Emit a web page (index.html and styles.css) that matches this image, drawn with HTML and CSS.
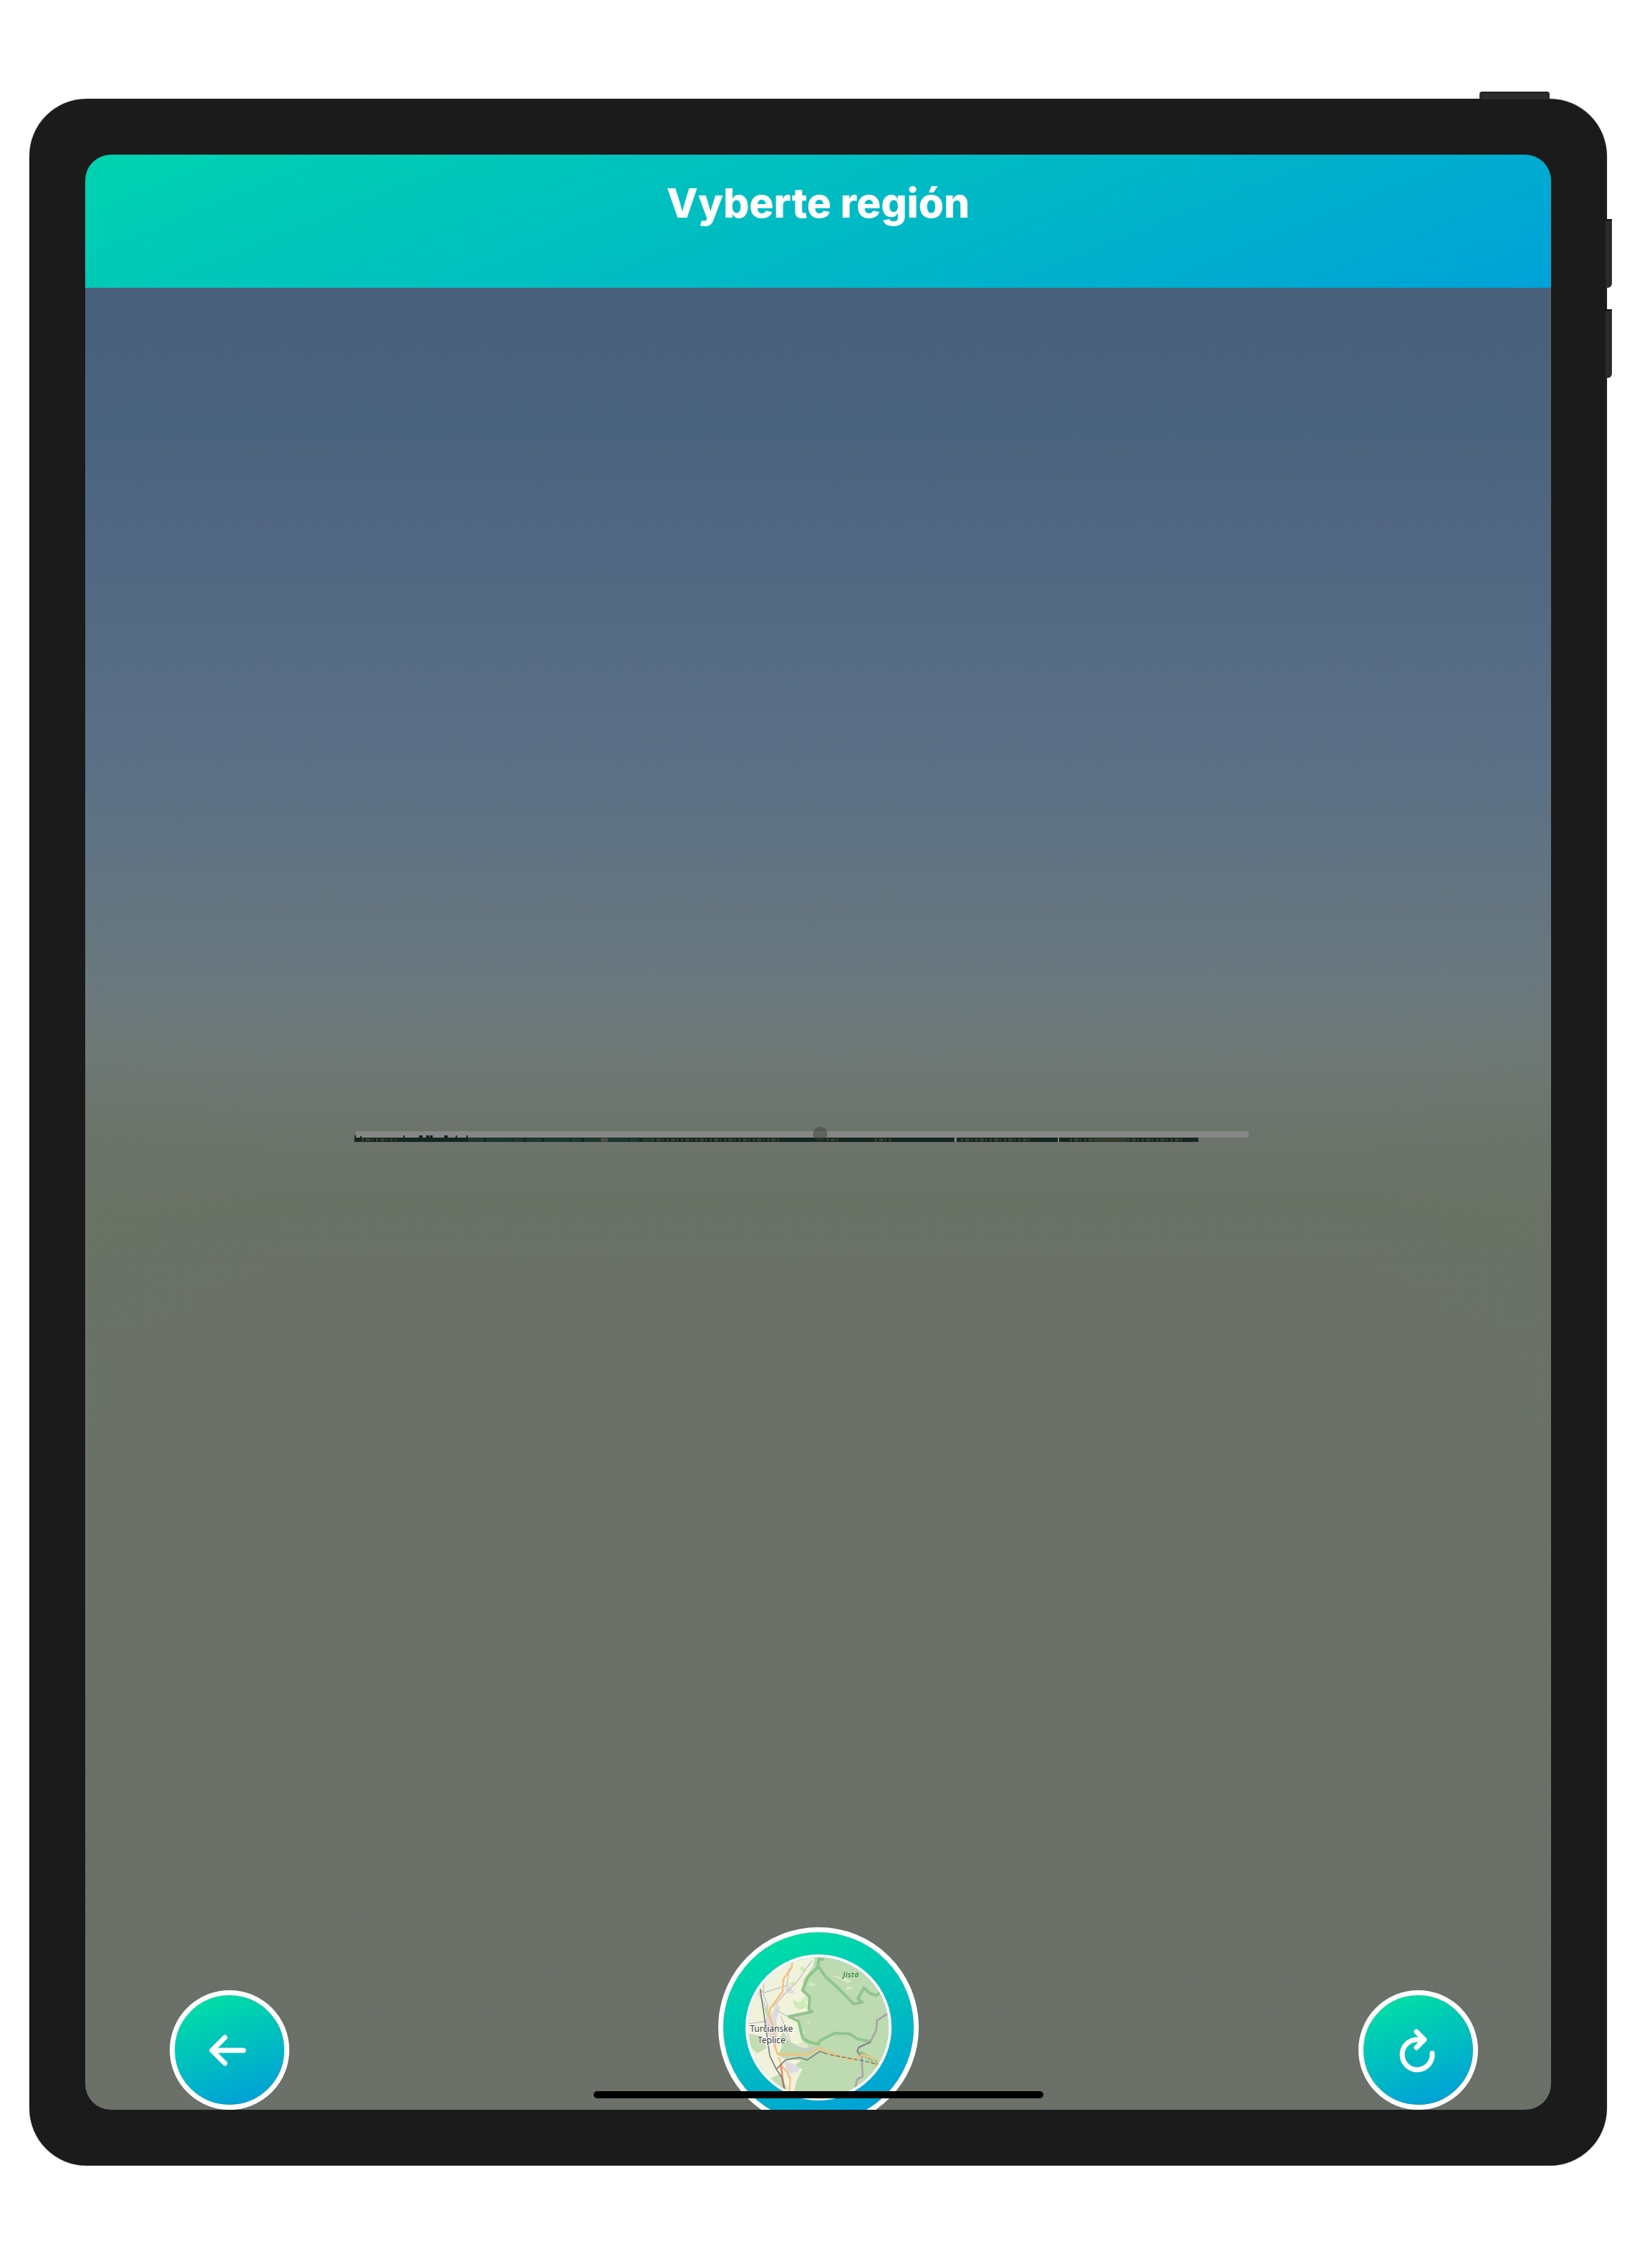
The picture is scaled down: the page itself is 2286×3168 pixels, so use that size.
FILE: index.html
```
<!DOCTYPE html>
<html lang="sk">
<head>
<meta charset="utf-8">
<meta name="viewport" content="width=device-width, initial-scale=1">
<title>Vyberte región</title>
<link rel="stylesheet" href="styles.css">
</head>
<body>
<div class="device">
  <span class="key key-power"></span>
  <span class="key key-up"></span>
  <span class="key key-down"></span>
  <div class="screen">
    <header class="header"><h1 class="title">Vyberte región</h1></header>
    <main class="scene">
      <svg class="model" viewBox="495 1574 1246 22" aria-hidden="true">
        <rect x="497" y="1580" width="1244" height="9" fill="#878787"/>
        <rect x="495" y="1589" width="1176" height="6" fill="#14261f"/>
        <path d="M495 1586h2v4h-2zM503 1587h2v3h-2zM563 1586h2v4h-2zM585 1586h5v4h-5zM595 1586h4v4h-4zM600 1586h4v4h-4zM620 1586h5v4h-5zM636 1586h2v4h-2zM651 1586h2v4h-2z" fill="#10231c"/>
        <path d="M653 1592H910" stroke="#1d3a30" stroke-width="5" stroke-dasharray="22 3 36 2 14 4"/>
        <path d="M505 1592h48M910 1592h178M1153 1592h16M1220 1592h24M1340 1592h100M1492 1592h160" stroke="#3a4033" stroke-width="4" stroke-dasharray="3 3 6 2 2 4"/>
        <path d="M838 1592h10" stroke="#4d4f48" stroke-width="5"/>
        <path d="M1331 1589h3v6h-3zM1475 1589h2v6h-2z" fill="#858782"/>
        <path d="M1525 1592h46" stroke="#353d2e" stroke-width="5"/>
        <circle cx="1144" cy="1584" r="10" fill="#3c3f3c" fill-opacity=".5"/>
      </svg>
      <nav class="controls">
        <button class="round back" type="button" aria-label="Späť">
          <svg class="icon" viewBox="0 0 153 153" aria-hidden="true"><path d="M96 77H52M70 59L52 77l18 18"/></svg>
        </button>
        <button class="round map" type="button" aria-label="Mapa">
          <svg class="map-art" viewBox="198 192 588 588" aria-hidden="true">
            <rect x="186" y="180" width="612" height="612" fill="#f1f2dc"/>
            <path d="M478 180L470 230 430 285 424 330 455 355 460 415 395 437 415 470 410 500 425 545 400 560 365 540 345 505 330 530 340 570 320 600 345 615 420 625 385 650 425 660 400 710 380 800H800V180z" fill="#bddab1"/>
            <path d="M186 510l60 10 30 50-40 25-50-50zM290 700l40-20 30 60-20 40zM262 405l16-8 10 35-12 8z" fill="#c3dcb4"/>
            <path d="M412 240l15-12 12 18-10 10zM385 370l30 12 15-22 16 40-30 12-25-12zM370 300l18-8 8 12-20 8zM440 308l20-12 22 8-10 10zM365 650l18-14 12 30z" fill="#cdebb8"/>
            <path d="M440 345l12 20-10 15-12-18zM444 458l12 4-5 12zM425 510l8-12 4 18zM398 555l30-10 25 18-10 12-35-5zM545 268l60 12 28 14-22 4zM603 320l24-6 8 8-20 6z" fill="#e0e8ca"/>
            <path d="M270 440l28-10 20-45 12 15-15 60 8 90-20 15-30-70zM350 325l16-20 14 20 12 15-22 5zM350 625l35 15 25 10-2 22-40 5 15 25-25-20z" fill="#dfdadd"/>
            <path d="M465 205l-35 50-30 42-30 28-70 75M370 235l-10 75-95 30-20-10M262 300v50l20 50M200 470l75-10M315 415l45 22 70 8M270 400l-35-70M335 440l45 125 50 8 60 10M415 570l15 12 70-6" fill="none" stroke="#ccc9cd" stroke-width="5"/>
            <g fill="none" stroke="#8fc58c" stroke-linejoin="round">
              <path d="M497 180L488 235 447 275 425 330 455 358 452 410 465 420 368 440 408 460 426 530 450 546 490 556 500 540 560 510 620 512 655 534 712 545" stroke-width="12"/>
              <path d="M488 200l26 0M492 230l28 42 55 50 65 66 35-8-18-15 25-45 25 22 28 10 24-22" stroke-width="12"/>
              <path d="M665 590l65 40 10 30" stroke-width="16"/>
            </g>
            <path d="M782 427l-45 30-3 40-25 50-48 22-6 18 18 20 4 85-22 10-12 50" fill="none" stroke="#aaa1aa" stroke-width="8"/>
            <path d="M712 547l-52 23-6 15 14 20" fill="none" stroke="#81917f" stroke-width="6"/>
            <path d="M382 215l-3 22-33 45-5 55-52 70-5 30 22 55 4 75 12 32 123 0 54-28 46 24 90 28 40-22 44 14 16 40" fill="none" stroke="#f6c07d" stroke-width="8" stroke-linejoin="round"/>
            <path d="M325 610l15 40 22 25 12 30-5 50" fill="none" stroke="#f6c07d" stroke-width="7"/>
            <path d="M334 640l6 50 10 70" fill="none" stroke="#f58e72" stroke-width="9"/>
            <path d="M248 325l22 150 18 130 26 54 24 36 14 60M316 660l38-38 60-10 30 10 54-36 32 12" fill="none" stroke="#7d7d7a" stroke-width="5"/>
            <path d="M540 600l150 28 45 12" fill="none" stroke="#6d776b" stroke-width="4" stroke-dasharray="18 7"/>
            <g class="map-town" text-anchor="middle"><text x="295" y="505">Turčianske</text><text x="295" y="552">Teplice</text></g>
            <text class="map-hill" x="627" y="277" text-anchor="middle">Jistá</text>
          </svg>
        </button>
        <button class="round reload" type="button" aria-label="Obnoviť">
          <svg class="icon" viewBox="0 0 153 153" aria-hidden="true"><path d="M96 81A21 21 0 1 1 75 62H85M74 51L85 62 74 73"/></svg>
        </button>
      </nav>
    </main>
    <span class="home"></span>
  </div>
</div>
</body>
</html>
```
FILE: styles.css
```
* { box-sizing: border-box; }
body {
  margin: 0;
  padding: 138px 42px 138px 41px;
  background: #fff;
  font-family: Inter, "Liberation Sans", sans-serif;
}
.device {
  position: relative;
  padding: 78px;
  border-radius: 80px;
  background: #1b1b1b;
  box-shadow: 0 0 1px 1px #8884;
}
.key { position: absolute; background: #2b2b2b; }
.key-power { top: -10px; right: 80px; width: 98px; height: 11px; border-radius: 4px 4px 0 0; border-top: 1px solid #111; }
.key-up, .key-down { right: -7px; width: 9px; height: 96px; border-radius: 0 0 6px 0; border-top: 2px solid #111; }
.key-up { top: 168px; }
.key-down { top: 294px; }
.screen {
  position: relative;
  display: flex;
  flex-direction: column;
  aspect-ratio: 2048 / 2732;
  border-radius: 36px;
  overflow: hidden;
}
.header {
  padding: 33px 0 83px;
  text-align: center;
  background: linear-gradient(158deg, #00d3b0, #00a2d7);
}
.title { margin: 0; font-size: 57px; line-height: 70px; font-weight: 800; color: #fff; }
.scene {
  flex: 1;
  display: flex;
  flex-direction: column;
  justify-content: space-between;
  padding-top: 1172px;
  background:
    radial-gradient(ellipse 16% 26% at 0 60%, #68756440, #68756400),
    radial-gradient(ellipse 16% 26% at 100% 60%, #68756440, #68756400),
    linear-gradient(#48607a 0, #4b647e 8%, #506681 13%, #566c84 20%, #5c7186 27%, #627482 32%, #69787f 38%, #6e7876 42%, #6c746c 46%, #6a7266 50%, #6b7067 58%, #6b7068 100%);
}
.model { display: block; width: 61%; margin-left: 376px; }
.controls {
  display: grid;
  grid-template-columns: 1fr auto 1fr;
  align-items: end;
  padding: 0 102px;
}
.round {
  display: flex;
  align-items: center;
  justify-content: center;
  width: 167px;
  height: 167px;
  padding: 0;
  border: 7px solid #fff;
  border-radius: 50%;
  background: linear-gradient(160deg, #00dfa5 8%, #009fd9 92%) padding-box;
}
.back { margin-left: 16px; }
.reload { justify-self: end; }
.map { width: 280px; height: 280px; margin-bottom: -25px; }
.icon { width: 153px; height: 153px; fill: none; stroke: #fff; stroke-width: 7; stroke-linecap: round; stroke-linejoin: round; }
.map-art { width: 204px; height: 204px; border: 4px solid #fff; border-radius: 50%; }
.map-town { font: 36px "Noto Sans", sans-serif; fill: #333; stroke: #fffc; stroke-width: 6px; paint-order: stroke; }
.map-hill { font: italic 700 32px "Noto Sans", sans-serif; fill: #3f8f45; stroke: #e4f2dccc; stroke-width: 4px; paint-order: stroke; }
.home {
  position: absolute;
  bottom: 16px;
  left: 50%;
  width: 628px;
  height: 10px;
  margin-left: -314px;
  border-radius: 5px;
  background: #000;
}
```
